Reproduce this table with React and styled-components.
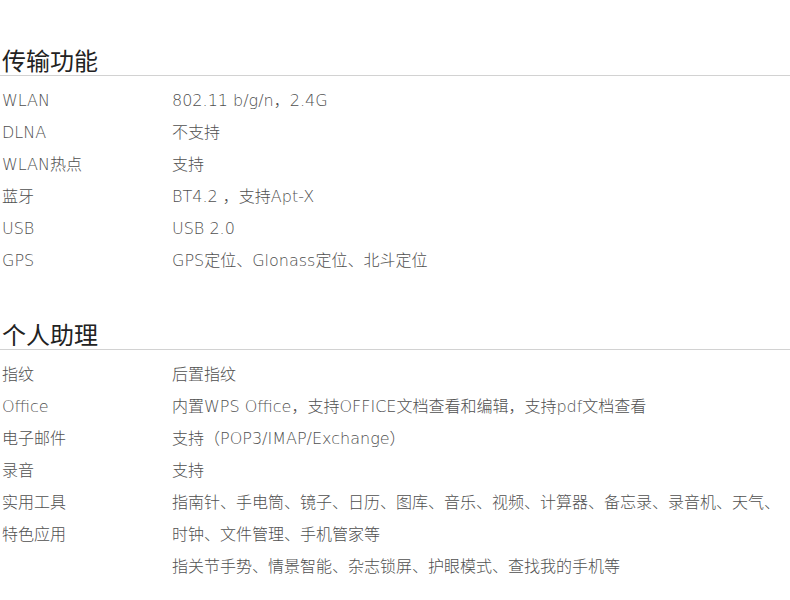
import React from "react";
import styled, { createGlobalStyle } from "styled-components";

const GlobalStyle = createGlobalStyle`
	body {
		margin: 0;
		background: #fff;
		font-family: "DejaVu Sans", "Noto Sans CJK SC", sans-serif;
	}
`;

const Wrapper = styled.div`
	width: 788px;
	padding: 45px 0 0 2px;
`;

const Section = styled.section`
	margin-bottom: 42px;
`;

const SectionTitle = styled.h2`
	margin: 0 0 0 -2px;
	padding-left: 2px;
	height: 30px;
	line-height: 30px;
	font-size: 24px;
	font-weight: 400;
	color: #222;
	font-family: "Noto Sans CJK SC", sans-serif;
	border-bottom: 1px solid #d2d2d2;
`;

const SpecBody = styled.div`
	display: flex;
	padding-top: 9px;
`;

const LabelColumn = styled.div`
	width: 170px;
	flex-shrink: 0;
`;

const ValueColumn = styled.div`
	flex: 1;
`;

const Line = styled.p`
	margin: 0;
	line-height: 32px;
	font-size: 16px;
	font-weight: 200;
	color: #505050;
	white-space: nowrap;
`;

const sections = [
	{
		title: "传输功能",
		labels: ["WLAN", "DLNA", "WLAN热点", "蓝牙", "USB", "GPS"],
		values: [
			"802.11 b/g/n，2.4G",
			"不支持",
			"支持",
			"BT4.2 ，支持Apt-X",
			"USB 2.0",
			"GPS定位、Glonass定位、北斗定位",
		],
	},
	{
		title: "个人助理",
		labels: ["指纹", "Office", "电子邮件", "录音", "实用工具", "特色应用"],
		values: [
			"后置指纹",
			"内置WPS Office，支持OFFICE文档查看和编辑，支持pdf文档查看",
			"支持（POP3/IMAP/Exchange）",
			"支持",
			"指南针、手电筒、镜子、日历、图库、音乐、视频、计算器、备忘录、录音机、天气、",
			"时钟、文件管理、手机管家等",
			"指关节手势、情景智能、杂志锁屏、护眼模式、查找我的手机等",
		],
	},
];

function App() {
	return (
		<Wrapper>
			<GlobalStyle />
			{sections.map((section) => (
				<Section key={section.title}>
					<SectionTitle>{section.title}</SectionTitle>
					<SpecBody>
						<LabelColumn>
							{section.labels.map((label) => (
								<Line key={label}>{label}</Line>
							))}
						</LabelColumn>
						<ValueColumn>
							{section.values.map((value, index) => (
								<Line key={index}>{value}</Line>
							))}
						</ValueColumn>
					</SpecBody>
				</Section>
			))}
		</Wrapper>
	);
}

export default App;
